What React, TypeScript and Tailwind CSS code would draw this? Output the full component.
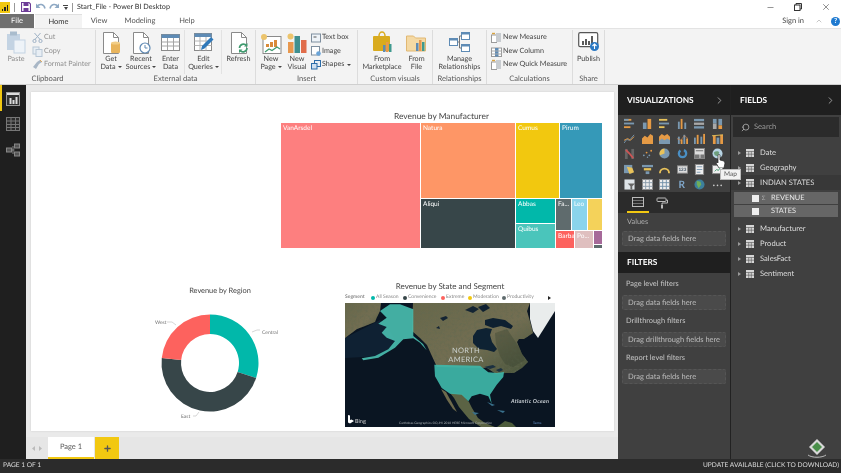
import React from "react";
import { ChevronRight, Search, X, Minus, ChevronUp, Plus } from "lucide-react";

const Svg = ({ s = 12, w, h, vb, children, className = "" }: any) => (
  <svg width={w ?? s} height={h ?? s} viewBox={vb ?? `0 0 ${w ?? s} ${h ?? s}`} className={"block shrink-0 " + className}>
    {children}
  </svg>
);

const Doc = ({ children }: any) => (
  <svg width="20" height="22" viewBox="0 0 20 22" className="block">
    <path d="M2.5 .5h10l5 5v16h-15z" fill="#fff" stroke="#8a8a8a" />
    <path d="M12.5 .5v5h5" fill="none" stroke="#8a8a8a" />
    {children}
  </svg>
);

const BIG: Record<string, React.ReactNode> = {
  paste: (
    <svg width="20" height="24" viewBox="0 0 20 24" className="block">
      <rect x="1" y="4" width="13" height="16" fill="#c3d3e3" />
      <rect x="4" y="1.500" width="7" height="4" fill="#a9bccd" />
      <rect x="8" y="10" width="11" height="13" fill="#eef3f8" stroke="#c3d3e3" />
    </svg>
  ),
  get: (
    <Doc>
      <rect x="10" y="11" width="9" height="10" rx="1" fill="#e8b45c" />
      <ellipse cx="14.500" cy="11" rx="4.500" ry="1.600" fill="#f2cd86" />
    </Doc>
  ),
  recent: (
    <Doc>
      <circle cx="14" cy="16" r="5" fill="#fff" stroke="#5f89b3" strokeWidth="1.200" />
      <path d="M14 13v3h2.500" fill="none" stroke="#5f89b3" />
    </Doc>
  ),
  enter: (
    <svg width="19" height="17" viewBox="0 0 19 17" className="block mb-[3px]">
      <rect x=".5" y=".5" width="18" height="16" fill="#fff" stroke="#8a8a8a" />
      <rect x=".5" y=".5" width="18" height="3.500" fill="#5e8bb5" />
      <path d="M.5 8h18M.5 12h18M6.500 4v12M12.500 4v12" stroke="#a5a5a5" fill="none" />
    </svg>
  ),
  edit: (
    <svg width="20" height="19" viewBox="0 0 20 19" className="block mb-[2px]">
      <rect x=".5" y=".5" width="17" height="17" fill="#fff" stroke="#8a8a8a" />
      <rect x=".5" y=".5" width="17" height="3.500" fill="#5e8bb5" />
      <path d="M.5 8h17M.5 12.500h17M6 4v13.500M12 4v13.500" stroke="#b5b5b5" fill="none" />
      <path d="M7 17l1-4 9-9 2.500 2.500-9 9z" fill="#2f78b9" />
    </svg>
  ),
  refresh: (
    <Doc>
      <path d="M10.500 16a4 4 0 0 1 7-2.500M18 16a4 4 0 0 1-7 2.500" fill="none" stroke="#3f9a6e" strokeWidth="1.700" />
      <path d="M18.500 11v3.500H15M10 21v-3.500h3.500" fill="#3f9a6e" />
    </Doc>
  ),
  page: (
    <svg width="22" height="21" viewBox="0 0 22 21" className="block">
      <rect x="3" y="3.500" width="18" height="17" fill="#fff" stroke="#8a8a8a" />
      <path d="M10 9h3v5h-3zM14 7h3v7h-3zM6 11h3v3H6z" fill="#d98b3a" />
      <path d="M5 19l4-3 3 1.500 5-3.500 3 2" fill="none" stroke="#3f9a6e" strokeWidth="1.200" />
      <circle cx="4" cy="4" r="3" fill="#ecc46c" />
    </svg>
  ),
  visual: (
    <svg width="21" height="21" viewBox="0 0 21 21" className="block">
      <rect x="1" y="9" width="5.500" height="11" fill="#e8984e" />
      <rect x="7.500" y="3" width="5.500" height="17" fill="#3f8f8f" />
      <rect x="14" y="7" width="5.500" height="13" fill="#e06c4a" />
      <circle cx="3.500" cy="3.500" r="3" fill="#ecc46c" />
    </svg>
  ),
  market: (
    <svg width="20" height="23" viewBox="0 0 20 23" className="block">
      <path d="M7 5a3 4 0 0 1 6 0" fill="none" stroke="#d9ab1e" strokeWidth="1.500" />
      <rect x="1" y="5" width="17" height="15" rx="1" fill="#d9ab1e" />
      <rect x="11" y="14" width="2.500" height="7" fill="#5e8bb5" />
      <rect x="14" y="11" width="2.500" height="10" fill="#e8984e" />
      <rect x="17" y="13" width="2.500" height="8" fill="#3f9a8f" />
    </svg>
  ),
  file: (
    <svg width="21" height="19" viewBox="0 0 21 19" className="block mb-[2px]">
      <path d="M.5 3h7l2 2h10v13H.5z" fill="#f4d9a4" stroke="#e1b873" />
      <rect x="10" y="10" width="2.500" height="8" fill="#5e8bb5" />
      <rect x="13" y="7" width="2.500" height="11" fill="#e8984e" />
      <rect x="16" y="9" width="2.500" height="9" fill="#3f9a8f" />
    </svg>
  ),
  manage: (
    <svg width="21" height="20" viewBox="0 0 21 20" className="block mb-[2px]">
      <g fill="#fff" stroke="#5e8bb5">
        <rect x=".5" y="6.500" width="8" height="7" />
        <rect x="12.500" y=".5" width="8" height="7" />
        <rect x="12.500" y="12.500" width="8" height="7" />
      </g>
      <path d="M.5 6.500h8v2h-8zM12.500 .5h8v2h-8zM12.500 12.500h8v2h-8z" fill="#5e8bb5" />
      <path d="M8.500 10h2V4h2M10.500 10v6h2" fill="none" stroke="#777" />
    </svg>
  ),
  publish: (
    <svg width="22" height="20" viewBox="0 0 22 20" className="block mb-[2px]">
      <rect x=".7" y=".7" width="19" height="14" rx="1.500" fill="#fff" stroke="#555" strokeWidth="1.200" />
      <path d="M5 9v4M8 7v6M11 9v4M14 4v9" stroke="#333" strokeWidth="1.600" />
      <circle cx="16.500" cy="14.500" r="4.500" fill="#2b78c2" />
      <path d="M16.500 17v-5M14.500 14l2-2 2 2" fill="none" stroke="#fff" strokeWidth="1.100" />
    </svg>
  ),
};

const SMALL: Record<string, React.ReactNode> = {
  cut: (
    <Svg s={11}>
      <path d="M2.500 1l6 7M8.500 1l-6 7" stroke="#9fb2c6" fill="none" />
      <circle cx="2.500" cy="9" r="1.600" fill="none" stroke="#9fb2c6" />
      <circle cx="8.500" cy="9" r="1.600" fill="none" stroke="#9fb2c6" />
    </Svg>
  ),
  copy: (
    <Svg s={11}>
      <rect x="1" y="1" width="6" height="7" fill="#e8eef4" stroke="#b8c7d6" />
      <rect x="4" y="3.500" width="6" height="7" fill="#e8eef4" stroke="#b8c7d6" />
    </Svg>
  ),
  fmt: (
    <Svg s={11}>
      <path d="M5 3l3-2 2 2-3 2zM5 3l2 2-3 5-3-2z" fill="#a9b7c6" />
      <path d="M8 1l2 2" stroke="#e0a95b" />
    </Svg>
  ),
  text: (
    <Svg s={10}>
      <rect x=".5" y="1" width="9" height="8" fill="#eef3f8" stroke="#7f8f9f" />
      <path d="M2.500 4h3" stroke="#555" />
    </Svg>
  ),
  img: (
    <Svg s={10}>
      <rect x=".5" y=".5" width="8" height="8.500" fill="#fff" stroke="#7f8f9f" />
      <circle cx="7.500" cy="7.500" r="2.300" fill="#6aa4d8" />
    </Svg>
  ),
  shapes: (
    <Svg s={10}>
      <rect x="3.500" y=".5" width="6" height="6" fill="#e8eef4" stroke="#2b6ca8" />
      <rect x=".5" y="3.500" width="5.500" height="5.500" fill="#cfe0f0" stroke="#2b6ca8" />
    </Svg>
  ),
  calc: (
    <Svg s={11}>
      <rect x=".5" y="3" width="5" height="7.500" fill="#fff" stroke="#9a9a9a" />
      <rect x="5" y="1" width="5" height="9" fill="#c8ccd0" />
      <path d="M1 1.500h3" stroke="#d9a441" strokeWidth="1.400" />
    </Svg>
  ),
  col: (
    <Svg s={11}>
      <rect x=".5" y="2" width="10" height="8.500" fill="#fff" stroke="#9a9a9a" />
      <rect x="4" y="2" width="3.500" height="8.500" fill="#5e8bb5" />
      <path d="M.5 5h10M.5 8h10" stroke="#aaa" />
    </Svg>
  ),
};

const Tri = () => <span className="inline-block ml-[2px] align-middle w-0 h-0 border-x-[2px] border-x-transparent border-t-[2.500px] border-t-[#444]" />;

const BigBtn = ({ icon, l1, l2, w, drop, dim }: any) => (
  <div className={`flex flex-col items-center shrink-0 ${dim ? "text-[#8d8d8d]" : "text-[#444]"}`} style={{ width: w }}>
    <div className="flex items-end justify-center h-[24px]">{BIG[icon]}</div>
    <div className="text-[7.200px] leading-[8.300px] mt-[1px] text-center whitespace-nowrap">{l1}</div>
    {l2 && (
      <div className="text-[7.200px] leading-[8.300px] text-center whitespace-nowrap">
        {l2}
        {drop && <Tri />}
      </div>
    )}
  </div>
);

const SmallBtn = ({ icon, label, dim, drop }: any) => (
  <div className={`flex items-center gap-[1px] h-[13.500px] whitespace-nowrap text-[7.200px] ${dim ? "text-[#8f8f8f]" : "text-[#444]"}`}>
    {SMALL[icon]}
    <span>{label}</span>
    {drop && <Tri />}
  </div>
);

const Group = ({ w, label, children }: any) => (
  <div className="flex flex-col h-full border-r border-[#dcdcdc] shrink-0" style={{ width: w }}>
    <div className="flex flex-1 min-h-0">{children}</div>
    <div className="h-[11px] leading-[10px] text-center text-[7.600px] text-[#5a5a5a]">{label}</div>
  </div>
);

const VS = () => <div className="w-px h-[44px] bg-[#e2e2e2] shrink-0 -ml-px" />;

const Col = ({ children, className = "" }: any) => <div className={`flex flex-col pt-[1px] ${className}`}>{children}</div>;

const Ribbon = () => (
  <div className="flex h-[56px] bg-[#f3f3f3] border-t border-[#e3e3e3] pt-[1px]">
    <Group w={96} label="Clipboard">
      <BigBtn icon="paste" l1="Paste" w={32} dim />
      <Col>
        <SmallBtn icon="cut" label="Cut" dim />
        <SmallBtn icon="copy" label="Copy" dim />
        <SmallBtn icon="fmt" label="Format Painter" dim />
      </Col>
    </Group>
    <Group w={160} label="External data">
      <BigBtn icon="get" l1="Get" l2="Data" drop w={30} />
      <BigBtn icon="recent" l1="Recent" l2="Sources" drop w={30} />
      <BigBtn icon="enter" l1="Enter" l2="Data" w={29} />
      <VS />
      <BigBtn icon="edit" l1="Edit" l2="Queries" drop w={37} />
      <VS />
      <BigBtn icon="refresh" l1="Refresh" w={33} />
    </Group>
    <Group w={102} label="Insert">
      <div className="w-[2px]" />
      <BigBtn icon="page" l1="New" l2="Page" drop w={26} />
      <BigBtn icon="visual" l1="New" l2="Visual" w={26} />
      <Col className="pl-[1px]">
        <SmallBtn icon="text" label="Text box" />
        <SmallBtn icon="img" label="Image" />
        <SmallBtn icon="shapes" label="Shapes" drop />
      </Col>
    </Group>
    <Group w={75} label="Custom visuals">
      <BigBtn icon="market" l1="From" l2="Marketplace" w={48} />
      <BigBtn icon="file" l1="From" l2="File" w={21} />
    </Group>
    <Group w={54} label="Relationships">
      <BigBtn icon="manage" l1="Manage" l2="Relationships" w={53} />
    </Group>
    <Group w={86} label="Calculations">
      <Col className="pl-[4px]">
        <SmallBtn icon="calc" label="New Measure" />
        <SmallBtn icon="col" label="New Column" />
        <SmallBtn icon="calc" label="New Quick Measure" />
      </Col>
    </Group>
    <Group w={32} label="Share">
      <BigBtn icon="publish" l1="Publish" w={31} />
    </Group>
    <div className="flex-1" />
  </div>
);

const TitleBar = () => (
  <div className="flex items-center h-[14px] bg-white text-[#333] relative">
    <div className="w-[10px] h-[11px] bg-[#f2c811] flex items-end justify-center gap-[1px] pb-[2px] ml-0 mt-[1px]">
      <i className="w-[1.500px] h-[2px] bg-[#222]" />
      <i className="w-[1.500px] h-[4px] bg-[#222]" />
      <i className="w-[1.500px] h-[6px] bg-[#222]" />
    </div>
    <div className="w-px h-[9px] bg-[#999] ml-[4px]" />
    <div className="ml-[6px]">
      <Svg s={10}>
        <path d="M.5 .5h7.500l1.500 1.500v7.500h-9z" fill="#fff" stroke="#6d3c97" strokeWidth="1.200" />
        <rect x="2.500" y="1" width="5" height="3" fill="#6d3c97" />
        <rect x="2.500" y="6" width="5" height="3" fill="#6d3c97" />
      </Svg>
    </div>
    <div className="ml-[4px]">
      <Svg s={11}>
        <path d="M2 4.500c2-3 7-3 8 2" fill="none" stroke="#8fa9c4" strokeWidth="1.500" />
        <path d="M1 1.500v4.500h4.500z" fill="#8fa9c4" />
      </Svg>
    </div>
    <div className="ml-[3px]">
      <Svg s={11}>
        <path d="M9 4.500c-2-3-7-3-8 2" fill="none" stroke="#8fa9c4" strokeWidth="1.500" />
        <path d="M10 1.500v4.500H5.500z" fill="#8fa9c4" />
      </Svg>
    </div>
    <div className="ml-[3px] flex flex-col items-center gap-[1px] w-[5px]">
      <i className="w-[5px] h-px bg-[#444]" />
      <i className="w-0 h-0 border-x-[2.500px] border-x-transparent border-t-[3px] border-t-[#444]" />
    </div>
    <div className="w-px h-[9px] bg-[#999] ml-[4px]" />
    <span className="ml-[4px] text-[7.200px] leading-none whitespace-nowrap">Start_File - Power BI Desktop</span>
    <div className="ml-auto flex items-center h-full">
      <div className="w-[28px] flex justify-center"><Minus size={9} strokeWidth={1.500} color="#444" /></div>
      <div className="w-[28px] flex justify-center">
        <Svg s={8}>
          <rect x=".5" y="2" width="5.500" height="5.500" fill="none" stroke="#333" />
          <path d="M2 2V.5h5.500V6H6" fill="none" stroke="#333" />
        </Svg>
      </div>
      <div className="w-[28px] flex justify-center mr-[1px]"><X size={10} strokeWidth={1.300} color="#333" /></div>
    </div>
  </div>
);

const TabBar = () => (
  <div className="flex items-stretch h-[14px] bg-white text-[7.500px] text-[#555] relative">
    <div className="w-[34px] bg-[#6f6f6f] text-white flex items-center justify-center">File</div>
    <div className="w-[47px] ml-[1px] bg-[#f3f3f3] text-[#333] flex items-center justify-center border-t border-[#e0e0e0] z-10">Home</div>
    <div className="w-[34px] flex items-center justify-center">View</div>
    <div className="w-[48px] flex items-center justify-center">Modeling</div>
    <div className="w-[46px] flex items-center justify-center">Help</div>
    <div className="ml-auto flex items-center pr-[1px]">
      <span className="text-[7.500px] text-[#444] mr-[11px]">Sign in</span>
      <ChevronUp size={8} color="#aaa" className="mr-[8px]" />
      <div className="w-[9px] h-[9px] rounded-full bg-[#1f7ad0] text-white text-[7px] font-bold leading-[9px] text-center">?</div>
    </div>
  </div>
);

const Rail = () => (
  <div className="w-[26px] bg-[#1f1f1f] shrink-0 relative flex flex-col items-center pt-[7px] gap-[9px]">
    <div className="absolute left-0 top-0 w-[2px] h-[26px] bg-[#f2c811]" />
    <Svg s={14}>
      <rect x=".5" y=".5" width="13" height="13" fill="#333" stroke="#999" />
      <path d="M1 1h12v2H1zM3.500 6h2v6h-2zM6.500 8h2v4h-2zM9.500 5h2v7h-2z" fill="#ddd" />
    </Svg>
    <Svg s={14} className="mt-[2px]">
      <rect x=".5" y=".5" width="13" height="13" fill="#2c2c2c" stroke="#777" />
      <path d="M.5 4h13M.5 7.500h13M.5 10.500h13M5 .5v13M9.500 .5v13" stroke="#777" fill="none" />
    </Svg>
    <Svg s={14} className="mt-[3px]">
      <g fill="#555" stroke="#888">
        <rect x=".5" y="5" width="5" height="4" />
        <rect x="8.500" y="1" width="5" height="4" />
        <rect x="8.500" y="9" width="5" height="4" />
      </g>
      <path d="M5.500 7h3M7 3v8" stroke="#888" fill="none" />
    </Svg>
  </div>
);

const Leaf = ({ c, label, className = "" }: any) => (
  <div className={`${className} text-white text-[6.500px] leading-none pl-[2px] pt-[3px] overflow-hidden whitespace-nowrap`} style={{ background: c }}>
    {label}
  </div>
);

const Treemap = () => (
  <div className="absolute left-[250px] top-[31px] w-[321px] h-[125px] flex gap-[1px]">
    <Leaf c="#fd7f7f" label="VanArsdel" className="w-[139px] h-full" />
    <div className="w-[94px] flex flex-col gap-[1px]">
      <Leaf c="#fe9666" label="Natura" className="h-[75px]" />
      <Leaf c="#374649" label="Aliqui" className="flex-1" />
    </div>
    <div className="flex-1 flex flex-col gap-[1px]">
      <div className="h-[75px] flex gap-[1px]">
        <Leaf c="#f2c80f" label="Cumus" className="flex-1" />
        <Leaf c="#3599b8" label="Pirum" className="w-[42px]" />
      </div>
      <div className="flex-1 flex gap-[1px]">
        <div className="w-[39px] flex flex-col gap-[1px]">
          <Leaf c="#01b8aa" label="Abbas" className="h-[24px]" />
          <Leaf c="#4ac5bb" label="Quibus" className="flex-1" />
        </div>
        <div className="flex-1 flex flex-col gap-[1px]">
          <div className="h-[31px] flex gap-[1px]">
            <Leaf c="#5f6b6d" label="Fa..." className="w-[15px]" />
            <Leaf c="#8ad4eb" label="Leo" className="w-[15px]" />
            <Leaf c="#f4d25a" label="" className="flex-1" />
          </div>
          <div className="flex-1 flex gap-[1px]">
            <Leaf c="#fd625e" label="Barba" className="w-[18px]" />
            <Leaf c="#dfbfbf" label="Po..." className="w-[18px]" />
            <div className="flex-1 flex flex-col gap-[1px]">
              <Leaf c="#a66999" label="" className="flex-1" />
              <Leaf c="#5f6b6d" label="" className="h-[3px]" />
            </div>
          </div>
        </div>
      </div>
    </div>
  </div>
);

const pt = (cx: number, cy: number, r: number, a: number) => {
  const t = (a * Math.PI) / 180;
  return [cx + r * Math.sin(t), cy - r * Math.cos(t)];
};
const arc = (a0: number, a1: number) => {
  const [cx, cy, R, r] = [60, 54, 48.500, 29];
  const [x0, y0] = pt(cx, cy, R, a0);
  const [x1, y1] = pt(cx, cy, R, a1);
  const [x2, y2] = pt(cx, cy, r, a1);
  const [x3, y3] = pt(cx, cy, r, a0);
  const lg = a1 - a0 > 180 ? 1 : 0;
  return `M${x0} ${y0}A${R} ${R} 0 ${lg} 1 ${x1} ${y1}L${x2} ${y2}A${r} ${r} 0 ${lg} 0 ${x3} ${y3}Z`;
};

const Donut = () => (
  <div className="absolute left-[119px] top-[191px] w-[140px] h-[140px] flex flex-col items-center">
    <div className="text-[7.400px] leading-none text-[#444] whitespace-nowrap absolute top-[4px] left-0 right-0 text-center">Revenue by Region</div>
    <svg width="140" height="120" viewBox="0 0 140 120" className="absolute left-0 top-[26px] overflow-visible">
      <path d={arc(0, 108)} fill="#01b8aa" />
      <path d={arc(108, 276)} fill="#374649" />
      <path d={arc(276, 360)} fill="#fd625e" />
      <path d="M17 13h5l4 3" fill="none" stroke="#bbb" strokeWidth=".6" />
      <path d="M110 21h-3l-5 2" fill="none" stroke="#bbb" strokeWidth=".6" />
      <path d="M43 107h3l3-4" fill="none" stroke="#bbb" strokeWidth=".6" />
      <text x="5" y="15" fontSize="5" fill="#777">West</text>
      <text x="112" y="24.500" fontSize="5" fill="#777">Central</text>
      <text x="31" y="109" fontSize="5" fill="#777">East</text>
    </svg>
  </div>
);

const MapArt = () => (
  <svg width="210" height="124" viewBox="345 305 210 124" className="block">
    <defs>
      <linearGradient id="land" x1="0" y1="0" x2="1" y2="1">
        <stop offset="0" stopColor="#66674a" />
        <stop offset="0.55" stopColor="#736e52" />
        <stop offset="1" stopColor="#46533a" />
      </linearGradient>
      <filter id="tex" x="0" y="0" width="100%" height="100%">
        <feTurbulence type="fractalNoise" baseFrequency="0.35" numOctaves="3" seed="4" />
        <feColorMatrix values="0 0 0 0 0.12  0 0 0 0 0.14  0 0 0 0 0.08  0 0 0 1.4 -0.6" />
        <feComposite in2="SourceGraphic" operator="in" />
      </filter>
    </defs>
    <rect x="345" y="305" width="210" height="124" fill="#0a1522" />
    <path d="M345 340l35-18 8 8 8 14-14 14-37 2z" fill="#132a40" opacity=".6" />
    <path d="M345 305h36l-1 8-3 6-2 5-10 4-8 3-12 9z" fill="url(#land)" />
    <path d="M413 305H530l-3 8 4 14 2 8-9 6-5 0-2 3 5 12 6 8-6 6-8 5-8 0-10 1-9-6-45-1-5 0-6-13-4-9-7-7-8-7z" fill="url(#land)" />
    <path d="M450 395l12 1 7 8 3 6 6 10 7 5 10 4h-14l-12-8-10-12-5-9z" fill="#5b6344" />
    <path d="M441 391l5 3 5 9 6 11-4-3-6-9z" fill="#6e6a4c" />
    <path d="M497 429l8-6 7 2 4 4z" fill="#4d5c3c" />
    <path d="M487 404l8 3-3 1zM497 412l8 1-2 2zM472 414l7 1-4 2z" fill="#39708c" />
    <path d="M345 305h36l-1 8-3 6-2 5-10 4-8 3-12 9z" filter="url(#tex)" />
    <path d="M413 305H530l-3 8 4 14 2 8-9 6-5 0-2 3 5 12 6 8-6 6-8 5-8 0-10 1-9-6-45-1-5 0-6-13-4-9-7-7-8-7z" filter="url(#tex)" />
    <path d="M495 335l12-4 12 18 6 13-12 7-8-3-5-8-4-12z" fill="#33402f" opacity=".35" />
    <path d="M473 338l4-6 9-2 6 1-2 6 2 7 5 7-3 3-7-2-8-1-6-6z" fill="#0e2233" />
    <path d="M485 322l8-2 12 2 8 6-2 3-10-3-8 2-8-3zM478 309l8-3 4 4-7 4z" fill="#0e2030" />
    <path d="M440 320l6-2 2 2-5 3zM436 330l3-2 1 3zM465 312l8-4 6 3-6 4z" fill="#142433" />
    <path d="M484 369l9-2 3 2-6 2zM496 372l5-2 2 2-4 2z" fill="#1b3040" />
    <path d="M530 305h25v8l-17 27-5-7-3-12z" fill="#e9ecec" />
    <path d="M413.300 311.300L400 306.300H390L380 313l6.700 6.700-8.400 6 8.400 3.300-5 5.700 5 5 8.300 3.300-6.700 8.300L375 358l-13.300 2.300 1.600 2 15-2.600L395 349.700l8.300-8.400 10-1 6.700 4.400 6.700 7.600-3.700-6.300-9.700-8z" fill="#49bcae" fillOpacity=".92" />
    <path d="M434.300 366.700L480 367.700l8.300 6.600 8.400.7 7.300-1-.7 5-6.600 7.700-6.700 10 1.700 9-3.400-7.400-8.300-2.600-8.300 2.600-3.400 5-6.600-6.600-11.700-1-8.300-5.700-6.700-11.700z" fill="#3fb7a9" fillOpacity=".92" />
    <text x="466" y="354.500" textAnchor="middle" fontSize="7.500" fill="#ccd2cf" letterSpacing=".3">NORTH</text>
    <text x="466" y="363.500" textAnchor="middle" fontSize="7.500" fill="#ccd2cf" letterSpacing=".3">AMERICA</text>
    <text x="511" y="405" fontSize="5.500" fontWeight="bold" fontStyle="italic" fill="#c6ccd2" letterSpacing=".25">Atlantic Ocean</text>
    <path d="M348 417v7.500l2 1 4-2.500-2.500-1.500-1.500.5v-4.500z" fill="#fff" />
    <text x="355" y="424.500" fontSize="5.500" fill="#d6d6d6">Bing</text>
    <text x="399" y="426" fontSize="3.200" fill="#aab0b4">Carthobas Geographics SIO,JHI 2018 HERE Microsoft Corporation</text>
    <text x="533" y="426" fontSize="3.200" fill="#6d9bd8">Terms</text>
  </svg>
);

const LegendItem = ({ c, t, w }: any) => (
  <div className="flex items-center gap-[1px]" style={{ width: w }}>
    <i className="w-[4px] h-[4px] rounded-full shrink-0" style={{ background: c }} />
    <span>{t}</span>
  </div>
);

const MapVisual = () => (
  <div className="absolute left-[314px] top-[188px] w-[210px] flex flex-col">
    <div className="h-[12px] text-center text-[8px] leading-[12px] text-[#444] whitespace-nowrap">Revenue by State and Segment</div>
    <div className="flex items-center h-[8px] mt-[2px] text-[5px] text-[#888] whitespace-nowrap">
      <span className="font-bold w-[26px]">Segment</span>
      <LegendItem c="#01b8aa" t="All Season" w={32} />
      <LegendItem c="#374649" t="Convenience" w={38} />
      <LegendItem c="#fd625e" t="Extreme" w={27} />
      <LegendItem c="#f2c80f" t="Moderation" w={34} />
      <LegendItem c="#5f6b6d" t="Productivity" w={46} />
      <i className="w-0 h-0 border-y-[2px] border-y-transparent border-l-[3px] border-l-[#222]" />
    </div>
    <div className="mt-[1px]"><MapArt /></div>
  </div>
);

const Canvas = () => (
  <div className="flex-1 flex flex-col bg-[#eaeaea] min-w-0">
    <div className="flex-1 pl-[5px] pr-[4px] pt-[7px] pb-[6px] min-h-0">
      <div className="relative h-full bg-white shadow-[0_0_2px_#ccc]">
        <div className="absolute left-[250px] top-[18px] w-[321px] text-center text-[8.400px] leading-[12px] text-[#444] whitespace-nowrap">Revenue by Manufacturer</div>
        <Treemap />
        <Donut />
        <MapVisual />
      </div>
    </div>
    <div className="h-[22px] flex items-stretch bg-[#e6e6e6]">
      <div className="w-[22px] flex items-center justify-center gap-[4px] pt-[1px]">
        <Svg w={3} h={5}><path d="M3 0v5L0 2.500z" fill="#bbb" /></Svg>
        <Svg w={3} h={5}><path d="M0 0v5l3-2.500z" fill="#bbb" /></Svg>
      </div>
      <div className="w-[46px] bg-white border-b-2 border-[#f2c811] flex items-center justify-center text-[7.500px] text-[#555]">Page 1</div>
      <div className="w-[24px] ml-[1px] bg-[#f2c811] flex items-center justify-center"><Plus size={9} strokeWidth={3.500} color="#555" /></div>
    </div>
  </div>
);

const bl = "#7a98b0", or = "#e59a45", ye = "#e8c25a", gy = "#a8a8a8";
const bars = (items: [number, number, number, number, string][]) => items.map((b, i) => <rect key={i} x={b[0]} y={b[1]} width={b[2]} height={b[3]} fill={b[4]} />);
const VIZ: React.ReactNode[] = [
  bars([[0, 1, 8, 2, or], [0, 1, 5, 2, bl], [0, 5, 11, 2, bl], [0, 9, 7, 2, or]]),
  bars([[1, 5, 4, 7, bl], [6, 1, 4, 11, or]]),
  bars([[0, 1, 9, 2, ye], [0, 5, 11, 2, bl], [0, 9, 6, 2, ye]]),
  bars([[1, 4, 2, 8, bl], [4, 1, 2, 11, or], [8, 5, 2, 7, bl]]),
  bars([[0, 1, 11, 2.500, bl], [0, 5, 11, 2.500, gy], [0, 9, 11, 2.500, bl]]),
  bars([[1, 1, 4, 5, bl], [1, 6, 4, 6, gy], [7, 1, 4, 7, bl], [7, 8, 4, 4, or]]),
  <g><path d="M0 11l3-4 3 1 5-6" fill="none" stroke={bl} /><path d="M0 8l4-2 3 2 4-4" fill="none" stroke={or} /></g>,
  <path d="M0 12V6l3-3 3 2 3-4 3 2v9z" fill={or} />,
  <g><path d="M0 12V4l3-3 3 2 3-2 3 3v8z" fill={or} /><path d="M0 9l3-3 3 2 3-2 3 2v4H0z" fill={bl} /></g>,
  <g>{bars([[1, 4, 2, 8, bl], [4, 7, 2, 5, or], [7, 2, 2, 10, bl], [10, 6, 2, 6, or]])}<path d="M0 6l4 2 4-5 4 3" fill="none" stroke="#c85" strokeWidth=".7" /></g>,
  <g>{bars([[0, 5, 2, 7, bl], [3, 2, 2, 10, or], [7, 4, 2, 8, bl], [10, 1, 2, 11, or]])}</g>,
  <g>{bars([[1, 3, 3, 9, or], [5, 5, 3, 7, bl], [9, 2, 3, 10, or]])}<path d="M0 3l12-1" stroke={ye} /></g>,
  <g>{bars([[1, 1, 3, 11, "#666"], [8, 1, 3, 11, "#666"]])}<path d="M2 2l4 4 4 5" stroke="#c55" strokeWidth="2" fill="none" /></g>,
  <g><circle cx="2" cy="8" r="1" fill={bl} /><circle cx="5" cy="5" r="1" fill={or} /><circle cx="8" cy="8" r="1" fill={bl} /><circle cx="10" cy="3" r="1" fill={or} /><circle cx="6" cy="10" r=".8" fill={bl} /></g>,
  <g><circle cx="6" cy="6" r="5.500" fill={bl} /><path d="M6 6V.5a5.500 5.500 0 0 0-5 7.500z" fill={ye} /></g>,
  <circle cx="6" cy="6" r="4" fill="none" stroke="#4a8fc4" strokeWidth="2.500" strokeDasharray="16 4" />,
  <g><rect x=".5" y=".5" width="11" height="11" fill="#ddd" stroke="#888" /><path d="M1 7h5v4H1zM7 7h4v4H7z" fill="#777" /><path d="M2 3h8" stroke="#666" /></g>,
  <g><circle cx="6" cy="6" r="5.500" fill="#b8d4e4" /><path d="M2 5c2-2 5-2 6 0l-2 4-3-1z" fill="#6d9e7a" /></g>,
  <g><rect x="0" y="1" width="9" height="9" fill="#7a98b0" /><path d="M3 3l6 1 2 5-5 2z" fill={ye} /></g>,
  <g><path d="M0 1h12v2.500H0z" fill={bl} /><path d="M2 4.500h8v2.500H2z" fill={ye} /><path d="M4 8h4v3H4z" fill={bl} /></g>,
  <path d="M1 10a5 5 0 0 1 10 0" fill="none" stroke={ye} strokeWidth="2" />,
  <g><rect x=".5" y="2" width="11" height="8" fill="#ddd" stroke="#888" /><text x="1.500" y="8" fontSize="5" fill="#456" fontWeight="bold">123</text></g>,
  <g><rect x="1.500" y=".5" width="9" height="11" fill="#eee" stroke="#888" /><path d="M3 3h6M3 6h6M3 9h4" stroke={bl} /></g>,
  <g><rect x=".5" y="1.500" width="11" height="9" fill="#eee" stroke="#888" /><path d="M3 8l2-2 2 1 2-3" stroke="#3f9a6e" fill="none" /></g>,
  <g><rect x=".5" y=".5" width="11" height="11" fill="#dfe4e8" /><path d="M4 5h8l-3 3v4l-2-1V8z" fill="#666" /></g>,
  <g><rect x=".5" y=".5" width="11" height="11" fill="#eee" stroke="#888" /><path d="M.5 4h11M.5 8h11M4 .5v11M8 .5v11" stroke="#89a" fill="none" /></g>,
  <g><rect x=".5" y=".5" width="11" height="11" fill="#eee" stroke="#888" /><path d="M.5 4h11M.5 8h11M4 .5v11M8 .5v11" stroke="#6f8fa8" fill="none" /></g>,
  <text x="1.500" y="10" fontSize="11" fontWeight="bold" fill="#7fa6c9">R</text>,
  <g><circle cx="6" cy="6" r="5.500" fill="#3c7f9c" /><path d="M3 2l4 1 1 3-3 4-2-4z" fill="#6fae5a" /></g>,
  <g><circle cx="2" cy="7" r=".9" fill="#ccc" /><circle cx="6" cy="7" r=".9" fill="#ccc" /><circle cx="10" cy="7" r=".9" fill="#ccc" /></g>,
];

const Dashed = ({ children }: any) => (
  <div className="mx-[4px] h-[15px] border border-dashed border-[#555] rounded-[2px] bg-[#4a4a4a] text-[7.500px] leading-[13px] text-[#bdbdbd] pl-[5px] whitespace-nowrap">{children}</div>
);
const PanelHead = ({ t, chev, className = "" }: any) => (
  <div className={`bg-[#1f1f1f] flex items-center pl-[9px] pr-[5px] text-white text-[8.300px] font-bold ${className}`}>
    <span>{t}</span>
    {chev && <ChevronRight size={11} strokeWidth={1.500} color="#ccc" className="ml-auto" />}
  </div>
);
const FilterLabel = ({ t }: any) => <div className="pl-[8px] h-[22px] flex items-center text-[7.400px] text-[#c6c6c6]">{t}</div>;

const Viz = () => (
  <div className="w-[112px] shrink-0 bg-[#404040] flex flex-col">
    <PanelHead t="VISUALIZATIONS" chev className="h-[30px]" />
    <div className="h-[77px] grid grid-cols-6 grid-rows-5 pl-[3px] pr-[4px] pt-[1px]">
      {VIZ.map((v, i) => (
        <div key={i} className="flex items-center justify-center">
          <svg width="11" height="11" viewBox="0 0 12 12" className="block">{v}</svg>
        </div>
      ))}
    </div>
    <div className="h-[21px] bg-[#2b2b2b] flex items-stretch relative">
      <div className="w-[22px] ml-[9px] border-b-2 border-[#f2c811] flex items-center justify-center">
        <Svg s={12}>
          <rect x=".5" y="1.500" width="11" height="9" fill="none" stroke="#bbb" />
          <path d="M.5 4.500h11M.5 7.500h11" stroke="#bbb" strokeDasharray="1 1" />
        </Svg>
      </div>
      <div className="w-[26px] flex items-center justify-center">
        <Svg s={12}>
          <rect x="1" y="1" width="9" height="3.500" rx=".8" fill="none" stroke="#bbb" />
          <path d="M10 3h1.500v3H6v2" fill="none" stroke="#bbb" />
          <rect x="5" y="8" width="2" height="3.500" fill="#bbb" />
        </Svg>
      </div>
    </div>
    <div className="h-[18px] pl-[9px] flex items-center text-[7.400px] text-[#a9a9a9]">Values</div>
    <Dashed>Drag data fields here</Dashed>
    <div className="h-[6px]" />
    <PanelHead t="FILTERS" className="h-[21px]" />
    <FilterLabel t="Page level filters" />
    <Dashed>Drag data fields here</Dashed>
    <FilterLabel t="Drillthrough filters" />
    <Dashed>Drag drillthrough fields here</Dashed>
    <FilterLabel t="Report level filters" />
    <Dashed>Drag data fields here</Dashed>
  </div>
);

const TableIcon = () => (
  <Svg s={8}>
    <rect width="8" height="8" fill="#d6d6d6" />
    <path d="M0 2.500h8M0 5.200h8M2.700 2.500V8M5.300 2.500V8" stroke="#555" strokeWidth=".6" fill="none" />
  </Svg>
);
const Table = ({ t, dark }: any) => (
  <div className={`h-[15px] flex items-center pl-[7px] text-[7.600px] text-[#ddd] whitespace-nowrap ${dark ? "bg-[#383838]" : ""}`}>
    <div className="w-[8px]"><i className="block w-0 h-0 border-y-[2px] border-y-transparent border-l-[3px] border-l-[#999]" /></div>
    <TableIcon />
    <span className="ml-[6px]">{t}</span>
  </div>
);
const Field = ({ t, sigma }: any) => (
  <div className="mx-[3px] h-[12px] bg-[#666] flex items-center text-[7.400px] text-[#e8e8e8] mb-[1px]">
    <i className="ml-[18px] w-[7px] h-[7px] bg-[#eee]" />
    <span className="w-[9px] text-center text-[6px] text-[#aaa]">{sigma ? "Σ" : ""}</span>
    <span className="ml-[3px]">{t}</span>
  </div>
);

const Fields = () => (
  <div className="w-[111px] shrink-0 bg-[#404040] flex flex-col border-l border-[#222] relative">
    <PanelHead t="FIELDS" chev className="h-[30px] pl-[6px]" />
    <div className="mx-[2px] mt-[2px] h-[20px] bg-[#2b2b2b] flex items-center pl-[8px] text-[7.600px] text-[#999]">
      <Search size={9} color="#bbb" className="-scale-x-100" />
      <span className="ml-[4px]">Search</span>
    </div>
    <div className="h-[8px]" />
    <Table t="Date" />
    <Table t="Geography" />
    <Table t="INDIAN STATES" dark />
    <div className="h-[2px]" />
    <Field t="REVENUE" sigma />
    <Field t="STATES" />
    <div className="h-[3px]" />
    <Table t="Manufacturer" />
    <Table t="Product" />
    <Table t="SalesFact" />
    <Table t="Sentiment" />
    <div className="absolute right-[14px] bottom-[1px]">
      <Svg w={20} h={20}>
        <path d="M10 1l8 8-8 8-8-8z" fill="#d8d8d8" />
        <path d="M10 4l5 5-5 5-5-5z" fill="#4a8f4a" />
        <path d="M1 17c4 3 14 3 18 0" fill="none" stroke="#bbb" />
      </Svg>
    </div>
  </div>
);

const Overlay = () => (
  <>
    <div className="absolute left-[720px] top-[169px] w-[21px] h-[11px] bg-[#f2f2f2] border border-[#bbb] text-[6.500px] leading-[9px] text-center text-[#555] z-20">Map</div>
    <svg width="11" height="14" viewBox="0 0 11 14" className="absolute left-[715px] top-[154px] z-20">
      <path d="M3 1.500a1 1 0 0 1 2 0V6l4 1 1 2-1 5H4L1 9l1-1 1 1z" fill="#fff" stroke="#222" strokeWidth=".7" />
    </svg>
  </>
);

export default function App() {
  return (
    <div className="relative w-[841px] h-[473px] overflow-hidden flex flex-col bg-white blur-[0.3px] [text-rendering:geometricPrecision]" style={{ fontFamily: 'Lato,"Noto Sans",sans-serif' }}>
      <TitleBar />
      <TabBar />
      <Ribbon />
      <div className="flex-1 flex min-h-0 border-t border-[#cfcfcf]">
        <Rail />
        <Canvas />
        <Viz />
        <Fields />
      </div>
      <div className="h-[14px] bg-[#2b2b2b] flex items-center justify-between px-[3px] pr-[2px] text-[6.600px] text-[#ddd]">
        <span>PAGE 1 OF 1</span>
        <span>UPDATE AVAILABLE (CLICK TO DOWNLOAD)</span>
      </div>
      <Overlay />
    </div>
  );
}
